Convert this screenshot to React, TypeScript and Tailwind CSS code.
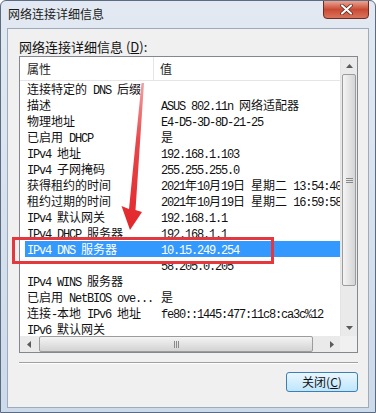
const ROWS: [string, string][] = [
  ["连接特定的 DNS 后缀", ""],
  ["描述", "ASUS 802.11n 网络适配器"],
  ["物理地址", "E4-D5-3D-8D-21-25"],
  ["已启用 DHCP", "是"],
  ["IPv4 地址", "192.168.1.103"],
  ["IPv4 子网掩码", "255.255.255.0"],
  ["获得租约的时间", "2021年10月19日 星期二 13:54:40"],
  ["租约过期的时间", "2021年10月19日 星期二 16:59:58"],
  ["IPv4 默认网关", "192.168.1.1"],
  ["IPv4 DHCP 服务器", "192.168.1.1"],
  ["IPv4 DNS 服务器", "10.15.249.254"],
  ["", "58.205.0.205"],
  ["IPv4 WINS 服务器", ""],
  ["已启用 NetBIOS ove...", "是"],
  ["连接-本地 IPv6 地址", "fe80::1445:477:11c8:ca3c%12"],
  ["IPv6 默认网关", ""],
];

// SimSun-style: half-width latin, full-width CJK
function Mixed({ text }: { text: string }) {
  const parts = text.match(/[\x00-\xff]+|[^\x00-\xff]+/g) ?? [];
  return (
    <>
      {parts.map((p, i) =>
        /[\x00-\xff]/.test(p[0]) ? (
          <span key={i} className="font-['Liberation_Mono',monospace] text-[12px] tracking-[-1.2px]">
            {p}
          </span>
        ) : (
          <span key={i}>{p}</span>
        )
      )}
    </>
  );
}

function Tri({ dir }: { dir: "up" | "down" | "left" | "right" }) {
  const pts = {
    up: "0,4 7,4 3.5,0",
    down: "0,0 7,0 3.5,4",
    left: "4,0 4,7 0,3.5",
    right: "0,0 0,7 4,3.5",
  }[dir];
  const vertical = dir === "up" || dir === "down";
  return (
    <svg width={vertical ? 7 : 4} height={vertical ? 4 : 7} viewBox={vertical ? "0 0 7 4" : "0 0 4 7"}>
      <polygon points={pts} fill="#5a5a5a" />
    </svg>
  );
}

export default function App() {
  return (
    <div className="relative w-[376px] h-[413px] overflow-hidden rounded-t-[6px] border border-[#5b6c82] bg-gradient-to-b from-[#e2e9f2] to-[#cddaea] font-['Noto_Sans_CJK_SC',sans-serif] text-[#111]">
      {/* title bar */}
      <div className="flex h-[27px] items-start">
        <div className="pl-[7px] pt-[5px] text-[12px] leading-[16px] text-[#1a1a1a]">网络连接详细信息</div>
        <div className="ml-auto mr-[6px] mt-[-1px] flex h-[19px] w-[46px] items-center justify-center rounded-b-[4px] border border-[#6b2c22] bg-gradient-to-b from-[#e8a493] via-[#c94a33] to-[#d9735c]">
          <svg width="13" height="11" viewBox="0 0 13 11">
            <path d="M2 1.5 L11 9.5 M11 1.5 L2 9.5" stroke="#5a1f16" strokeWidth="3.6" strokeLinecap="round" />
            <path d="M2 1.5 L11 9.5 M11 1.5 L2 9.5" stroke="#fff" strokeWidth="2.2" strokeLinecap="round" />
          </svg>
        </div>
      </div>

      {/* content panel */}
      <div className="ml-[6px] flex h-[380px] w-[362px] flex-col border border-[#9eabbd] bg-[#f0f0f0] pt-[10px]">
        <div className="pl-[11px] text-[13px] leading-[16px]">
          网络连接详细信息 (<span className="underline">D</span>):
        </div>

        {/* list view */}
        <div className="ml-[11px] mt-[1px] flex h-[297px] w-[339px] flex-col border border-[#828790] bg-white">
          <div className="flex h-[279px]">
            <div className="flex w-[320px] flex-col overflow-hidden">
              <div className="flex h-[24px] shrink-0 items-center border-b border-[#e5e5e5] text-[12px] text-[#1e1e1e]">
                <div className="h-full w-[134px] border-r border-[#e5e5e5] pl-[7px] leading-[23px]">属性</div>
                <div className="pl-[6px] leading-[23px]">值</div>
              </div>
              {ROWS.map(([k, v], i) => {
                const sel = i === 10;
                return (
                  <div
                    key={i}
                    className={
                      "ml-[5px] flex h-[16px] shrink-0 whitespace-nowrap text-[12px] leading-[16px] " +
                      (sel ? "bg-[#3399ff] text-white" : "")
                    }
                  >
                    <div className="w-[129px] shrink-0 overflow-hidden pl-[2px]">
                      <Mixed text={k} />
                    </div>
                    <div className="flex-1 overflow-hidden pl-[7px]">
                      <Mixed text={v} />
                    </div>
                  </div>
                );
              })}
            </div>

            {/* vertical scrollbar */}
            <div className="flex w-[17px] flex-col border-l border-[#e3e3e3] bg-[#eaeaea]">
              <div className="flex h-[17px] shrink-0 items-center justify-center">
                <Tri dir="up" />
              </div>
              <div className="mx-[1px] flex h-[212px] shrink-0 items-center justify-center rounded-[2px] border border-[#9c9c9c] bg-gradient-to-r from-[#f4f4f4] to-[#d5d5d5]">
                <div className="flex w-[7px] flex-col gap-[1px]">
                  <div className="h-px bg-[#8a8a8a]" />
                  <div className="h-px bg-[#8a8a8a]" />
                  <div className="h-px bg-[#8a8a8a]" />
                </div>
              </div>
              <div className="flex-1" />
              <div className="flex h-[17px] shrink-0 items-center justify-center">
                <Tri dir="down" />
              </div>
            </div>
          </div>

          {/* horizontal scrollbar */}
          <div className="flex h-[16px] bg-[#eaeaea]">
            <div className="flex w-[17px] items-center justify-center">
              <Tri dir="left" />
            </div>
            <div className="ml-[2px] flex w-[274px] items-center justify-center rounded-[2px] border border-[#9c9c9c] bg-gradient-to-b from-[#f4f4f4] to-[#d3d3d3]">
              <div className="flex h-[7px] gap-[1px]">
                <div className="w-px bg-[#8a8a8a]" />
                <div className="w-px bg-[#8a8a8a]" />
                <div className="w-px bg-[#8a8a8a]" />
              </div>
            </div>
            <div className="flex-1" />
            <div className="flex w-[17px] items-center justify-center">
              <Tri dir="right" />
            </div>
            <div className="w-[17px] bg-[#f0f0f0]" />
          </div>
        </div>

        {/* separator */}
        <div className="ml-[11px] mt-[9px] w-[339px] border-t border-b border-t-[#a0a0a0] border-b-white" />

        <div className="mt-[8px] flex justify-end pr-[10px]">
          <div className="flex h-[20px] w-[72px] items-center justify-center rounded-[3px] border border-[#3c7fb1] bg-gradient-to-b from-[#eaf6fd] to-[#bee6fd] text-[12px] leading-[16px]">
            关闭(<span className="underline">C</span>)
          </div>
        </div>
      </div>

      {/* annotation overlays */}
      <div className="pointer-events-none absolute left-[11px] top-[236px] h-[27px] w-[262px] border-[3px] border-[#e5383d]" />
      <svg className="pointer-events-none absolute left-0 top-0" width="376" height="413" viewBox="0 0 376 413">
        <defs>
          <linearGradient id="arr" x1="0" y1="0" x2="0" y2="1">
            <stop offset="0" stopColor="#f3a0a0" />
            <stop offset="0.4" stopColor="#e8474a" />
            <stop offset="1" stopColor="#e2262b" />
          </linearGradient>
        </defs>
        <polygon points="140.5,82 143,82 134.5,209 141,211 129,229 120.5,205 128,208" fill="url(#arr)" />
      </svg>
    </div>
  );
}
